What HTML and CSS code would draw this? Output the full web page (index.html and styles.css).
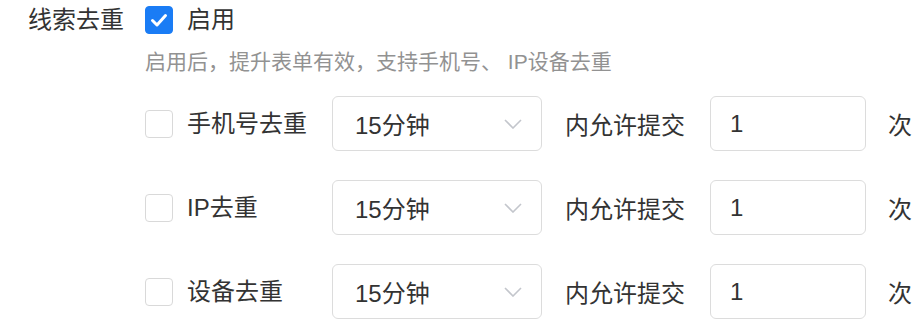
FILE: index.html
```
<!DOCTYPE html>
<html lang="zh-CN">
<head>
<meta charset="utf-8">
<title>线索去重</title>
<link rel="stylesheet" href="styles.css">
</head>
<body>
<div class="form-item">
  <div class="form-label">线索去重</div>
  <div class="form-content">
    <label class="check main-check">
      <span class="box checked">
        <svg viewBox="0 0 28 28" width="28" height="28"><path d="M7.5 14.5 L12 19 L20.5 9.5" fill="none" stroke="#fff" stroke-width="3" stroke-linecap="round" stroke-linejoin="round"/></svg>
      </span>
      <span class="check-text">启用</span>
    </label>
    <div class="hint">启用后，提升表单有效，支持手机号、 IP设备去重</div>
    <div class="rules">
      <div class="rule">
        <label class="check rule-check"><span class="box"></span><span class="check-text">手机号去重</span></label>
        <div class="select"><span>15分钟</span><svg class="chev" viewBox="0 0 18 10" width="18" height="10"><path d="M1 1 L9 9 L17 1" fill="none" stroke="#c3c6cc" stroke-width="1.6"/></svg></div>
        <span class="txt">内允许提交</span>
        <div class="input">1</div>
        <span class="unit">次</span>
      </div>
      <div class="rule">
        <label class="check rule-check"><span class="box"></span><span class="check-text">IP去重</span></label>
        <div class="select"><span>15分钟</span><svg class="chev" viewBox="0 0 18 10" width="18" height="10"><path d="M1 1 L9 9 L17 1" fill="none" stroke="#c3c6cc" stroke-width="1.6"/></svg></div>
        <span class="txt">内允许提交</span>
        <div class="input">1</div>
        <span class="unit">次</span>
      </div>
      <div class="rule">
        <label class="check rule-check"><span class="box"></span><span class="check-text">设备去重</span></label>
        <div class="select"><span>15分钟</span><svg class="chev" viewBox="0 0 18 10" width="18" height="10"><path d="M1 1 L9 9 L17 1" fill="none" stroke="#c3c6cc" stroke-width="1.6"/></svg></div>
        <span class="txt">内允许提交</span>
        <div class="input">1</div>
        <span class="unit">次</span>
      </div>
    </div>
  </div>
</div>
</body>
</html>
```

FILE: styles.css
```
html, body {
  margin: 0;
  padding: 0;
  background: #fff;
}
body {
  font-family: "Liberation Sans", "Noto Sans CJK SC", sans-serif;
  color: #333;
  font-size: 24px;
}
.form-item {
  display: flex;
  padding-left: 28px;
}
.form-label {
  width: 117px;
  line-height: 40px;
  height: 40px;
  color: #333;
}
.form-content {
  display: flex;
  flex-direction: column;
}
.check {
  display: flex;
  align-items: center;
  gap: 14px;
}
.main-check {
  height: 40px;
}
.box {
  width: 28px;
  height: 28px;
  box-sizing: border-box;
  border: 1.5px solid #d9d9d9;
  border-radius: 4px;
  background: #fff;
  display: block;
  flex: none;
}
.box.checked {
  background: #1a7cf5;
  border-color: #1a7cf5;
}
.box.checked svg {
  display: block;
  margin: -1.5px;
}
.check-text {
  line-height: 30px;
}
.hint {
  margin-top: 8px;
  font-size: 21px;
  line-height: 28px;
  height: 28px;
  color: #929292;
}
.rules {
  margin-top: 20px;
  display: flex;
  flex-direction: column;
  gap: 29px;
}
.rule {
  display: flex;
  align-items: center;
  height: 55px;
}
.rule-check {
  width: 187px;
  flex: none;
}
.select {
  width: 210px;
  height: 55px;
  box-sizing: border-box;
  border: 1.5px solid #dcdcdc;
  border-radius: 6px;
  display: flex;
  align-items: center;
  justify-content: space-between;
  padding: 0 19px 0 22px;
  flex: none;
}
.chev {
  display: block;
}
.txt {
  margin-left: 23px;
  width: 145px;
  flex: none;
}
.input {
  width: 156px;
  height: 55px;
  box-sizing: border-box;
  border: 1.5px solid #dcdcdc;
  border-radius: 6px;
  padding-left: 19px;
  display: flex;
  align-items: center;
  flex: none;
}
.unit {
  margin-left: 22px;
}
```
